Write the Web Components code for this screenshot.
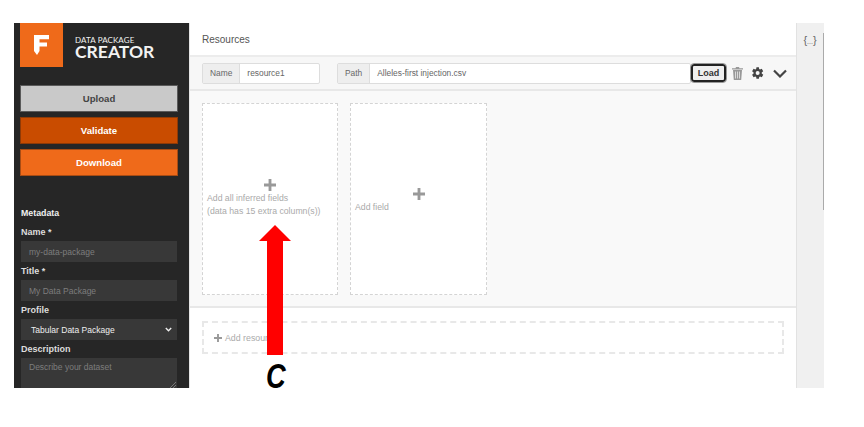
<!DOCTYPE html>
<html>
<head>
<meta charset="utf-8">
<title>Data Package Creator</title>
<style>
  html, body { margin: 0; padding: 0; background: #fff; }
  body { width: 864px; height: 427px; position: relative; overflow: hidden; font-family: "Liberation Sans", Arial, sans-serif; }
</style>
</head>
<body>
<dp-app>
  <dp-sidebar slot="sidebar">
    <dp-button slot="actions" kind="upload">Upload</dp-button>
    <dp-button slot="actions" kind="validate">Validate</dp-button>
    <dp-button slot="actions" kind="download">Download</dp-button>
    <dp-field slot="meta" label="Name *" placeholder="my-data-package"></dp-field>
    <dp-field slot="meta" label="Title *" placeholder="My Data Package"></dp-field>
    <dp-field slot="meta" label="Profile" type="select" placeholder="Tabular Data Package"></dp-field>
    <dp-field slot="meta" label="Description" type="textarea" placeholder="Describe your dataset"></dp-field>
  </dp-sidebar>
  <dp-resources slot="main">
    <dp-add-card slot="cards" width="136" shift="-1">Add all inferred fields<br>(data has 15 extra column(s))</dp-add-card>
    <dp-add-card slot="cards" width="137" shift="2">Add field</dp-add-card>
  </dp-resources>
  <dp-json-tab slot="aside"></dp-json-tab>
</dp-app>
<dp-annotation></dp-annotation>

<script>
const plusIcon = size => `<svg width="${size}" height="${size}" viewBox="0 0 11 11"><path d="M4.200 0h2.600v4.200H11v2.600H6.800V11H4.200V6.800H0V4.200h4.200z" fill="#999"/></svg>`

class DpApp extends HTMLElement {
  constructor() {
    super()
    this.attachShadow({ mode: 'open' })
    this.shadowRoot.innerHTML = `
      <style>
        :host { display: flex; width: 810px; height: 365px; margin: 23px 0 0 14px; overflow: hidden; }
        ::slotted([slot=sidebar]) { flex: 0 0 176px; }
        ::slotted([slot=main]) { flex: 0 0 606px; min-width: 0; }
        ::slotted([slot=aside]) { flex: 0 0 28px; }
      </style>
      <slot name="sidebar"></slot>
      <slot name="main"></slot>
      <slot name="aside"></slot>`
  }
}

class DpSidebar extends HTMLElement {
  constructor() {
    super()
    this.attachShadow({ mode: 'open' })
    this.shadowRoot.innerHTML = `
      <style>
        :host { display: block; box-sizing: border-box; height: 365px; overflow: hidden; background: #262626; color: #fff; padding-left: 6px; border-right: 1px solid #e4e4e4; }
        .brand { display: flex; align-items: center; height: 44px; }
        .mark { width: 43px; height: 44px; background: #ef6a1a; display: flex; align-items: center; justify-content: center; flex: none; }
        .name { margin-left: 12px; font-family: Lato, sans-serif; color: #f2f2f2; padding-top: 3px; }
        .small { font-size: 8px; line-height: 10px; letter-spacing: .1px; }
        .big { font-size: 17.5px; line-height: 14px; font-weight: 700; letter-spacing: 0; }
        .actions { display: flex; flex-direction: column; gap: 5px; margin-top: 18px; width: 158px; }
        h2 { margin: 31px 0 0 1px; font-size: 8.8px; line-height: 12px; font-weight: 700; color: #f0f0f0; }
        .meta { margin: 8px 0 0 1px; width: 156px; display: flex; flex-direction: column; gap: 4px; }
      </style>
      <div class="brand">
        <div class="mark">
          <svg width="15" height="20" viewBox="0 0 15 20"><path d="M0 0h15v4.200H5.500v3.400H13v4H5.500V16L3 20 0 16z" fill="#fff"/></svg>
        </div>
        <div class="name"><div class="small">DATA PACKAGE</div><div class="big">CREATOR</div></div>
      </div>
      <div class="actions"><slot name="actions"></slot></div>
      <h2>Metadata</h2>
      <div class="meta"><slot name="meta"></slot></div>`
  }
}

class DpButton extends HTMLElement {
  static colors = {
    upload: ['#c9c9c9', '#444', '#5a5a5a'],
    validate: ['#c94c00', '#fff', '#8f3a06'],
    download: ['#ef6a1a', '#fff', '#a84c14']
  }

  constructor() {
    super()
    this.attachShadow({ mode: 'open' })
  }

  connectedCallback() {
    const [bg, fg, border] = DpButton.colors[this.getAttribute('kind')]
    this.shadowRoot.innerHTML = `
      <style>
        :host { display: flex; box-sizing: border-box; height: 27px; align-items: center; justify-content: center; background: ${bg}; color: ${fg}; border: 1px solid ${border}; font-size: 9.6px; font-weight: 700; }
      </style>
      <slot></slot>`
  }
}

class DpField extends HTMLElement {
  constructor() {
    super()
    this.attachShadow({ mode: 'open' })
  }

  connectedCallback() {
    const type = this.getAttribute('type') || 'text'
    const text = this.getAttribute('placeholder')
    const extra = type == 'select'
      ? `<svg width="7" height="5" viewBox="0 0 7 5"><path d="M.8 1l2.700 2.700L6.200 1" fill="none" stroke="#eee" stroke-width="1.400"/></svg>`
      : type == 'textarea'
        ? `<svg class="grip" width="6" height="6" viewBox="0 0 6 6"><path d="M0 6l6-6M3 6l3-3" stroke="#888" stroke-width=".8"/></svg>`
        : ''
    this.shadowRoot.innerHTML = `
      <style>
        :host { display: block; }
        label { display: block; font-size: 9px; line-height: 11px; font-weight: 700; color: #ddd; margin-bottom: 3px; }
        .box { position: relative; box-sizing: border-box; height: 21px; background: #383838; color: #7d7d7d; font-size: 8.5px; display: flex; align-items: center; justify-content: space-between; padding: 0 5px 0 8px; }
        .select { color: #eee; padding-left: 10px; }
        .textarea { height: 30px; align-items: flex-start; padding-top: 4px; }
        .grip { position: absolute; right: 1px; bottom: 0; }
      </style>
      <label>${this.getAttribute('label')}</label>
      <div class="box ${type}"><span>${text}</span>${extra}</div>`
  }
}

class DpResources extends HTMLElement {
  constructor() {
    super()
    this.attachShadow({ mode: 'open' })
    this.shadowRoot.innerHTML = `
      <style>
        :host { display: block; box-sizing: border-box; height: 365px; background: #fff; color: #555; font-size: 8.4px; }
        .title { height: 34px; line-height: 33px; padding-left: 12px; font-size: 10px; color: #555; box-sizing: border-box; border-bottom: 2px solid #ececec; }
        .bar { display: flex; align-items: center; box-sizing: border-box; height: 34px; padding: 0 0 0 12px; background: #f7f7f7; border-bottom: 2px solid #e8e8e8; }
        .group { display: flex; box-sizing: border-box; height: 21px; border: 1px solid #ddd; border-radius: 2px; background: #fff; align-items: center; }
        .addon { align-self: stretch; display: flex; align-items: center; background: #eee; border-right: 1px solid #ddd; color: #666; padding: 0 7px; }
        .val { padding-left: 7px; color: #666; }
        .name { width: 118px; margin-right: 17px; }
        .path { width: 354px; }
        .load { box-sizing: border-box; width: 35px; height: 18px; margin-right: 6px; background: #efefef; border: 2px solid #222; border-radius: 3px; outline: 1px solid #999; display: flex; align-items: center; justify-content: center; font-size: 9px; font-weight: 700; color: #333; }
        .icons { display: flex; align-items: center; }
        .cards { display: flex; gap: 12px; height: 217px; box-sizing: border-box; padding: 12px; background: #f9f9f9; border-bottom: 2px solid #e8e8e8; }
        .add { margin: 13px 12px 0; height: 33px; box-sizing: border-box; border: 2px dashed #e8e8e8; display: flex; align-items: center; gap: 3px; padding-left: 10px; color: #aaa; font-size: 8.8px; }
      </style>
      <div class="title">Resources</div>
      <div class="bar">
        <div class="group name"><span class="addon">Name</span><span class="val">resource1</span></div>
        <div class="group path"><span class="addon">Path</span><span class="val">Alleles-first injection.csv</span></div>
        <div class="load">Load</div>
        <div class="icons">
          <svg width="11" height="13" viewBox="0 0 11 13" style="margin-right:9px"><path d="M1 3h9l-.8 10H1.800zM0 1.200h3.500L4 0h3l.5 1.200H11V2.400H0z" fill="#999"/><path d="M3.500 4.500v7M5.500 4.500v7M7.500 4.500v7" stroke="#f7f7f7" stroke-width=".7"/></svg>
          <svg width="12" height="12" viewBox="0 0 24 24" style="margin-right:9px"><path d="M19.400 13a7.500 7.500 0 0 0 0-2l3-2.300-2.900-5-3.500 1.400a7.500 7.500 0 0 0-1.700-1L13.800 .5H8.900L8.300 4.100a7.500 7.500 0 0 0-1.700 1L3.100 3.700 .2 8.700l3 2.300a7.500 7.500 0 0 0 0 2l-3 2.300 2.900 5 3.500-1.400a7.500 7.500 0 0 0 1.700 1l.6 3.600h4.900l.6-3.600a7.500 7.500 0 0 0 1.700-1l3.500 1.400 2.900-5zM11.300 16a4 4 0 1 1 0-8 4 4 0 0 1 0 8z" fill="#444"/></svg>
          <svg width="14" height="9" viewBox="0 0 14 9"><path d="M1 1.500l6 6 6-6" fill="none" stroke="#444" stroke-width="2.200"/></svg>
        </div>
      </div>
      <div class="cards"><slot name="cards"></slot></div>
      <div class="add">${plusIcon(8)}<span>Add resource</span></div>`
  }
}

class DpAddCard extends HTMLElement {
  constructor() {
    super()
    this.attachShadow({ mode: 'open' })
  }

  connectedCallback() {
    const shift = Number(this.getAttribute('shift'))
    this.shadowRoot.innerHTML = `
      <style>
        :host { display: flex; flex-direction: column; justify-content: center; box-sizing: border-box; width: ${this.getAttribute('width')}px; height: 192px; background: #fff; border: 1px dashed #d4d4d4; padding: ${Math.max(shift, 0) * 2}px 4px ${Math.max(-shift, 0) * 2}px; color: #aaa; font-size: 8.7px; line-height: 13px; }
        .plus { display: flex; justify-content: center; margin-bottom: 1px; }
      </style>
      <div class="plus">${plusIcon(12)}</div>
      <div><slot></slot></div>`
  }
}

class DpJsonTab extends HTMLElement {
  constructor() {
    super()
    this.attachShadow({ mode: 'open' })
    this.shadowRoot.innerHTML = `
      <style>
        :host { display: block; box-sizing: border-box; height: 365px; background: #f0f0f0; border-left: 1px solid #e2e2e2; color: #666; font-size: 11px; line-height: 13px; text-align: center; padding: 11px 1px 0 0; background-image: linear-gradient(#aaa, #aaa); background-size: 1px 177px; background-repeat: no-repeat; background-position: right 0 top 10px; }
        small { font-size: 7px; }
      </style>
      {<small>...</small>}`
  }
}

/* The red arrow and the handwritten letter lie over the page */
class DpAnnotation extends HTMLElement {
  constructor() {
    super()
    this.attachShadow({ mode: 'open' })
    this.shadowRoot.innerHTML = `
      <style>
        :host { display: block; position: absolute; left: 258px; top: 225px; width: 34px; height: 170px; }
        svg { display: block; }
        span { position: absolute; left: 8px; top: 131px; font: italic 700 35px/40px "Liberation Sans", sans-serif; color: #000; transform: scaleX(.78); transform-origin: left top; }
      </style>
      <svg width="34" height="130" viewBox="0 0 34 130"><path d="M17 0L33 16H25V130H9V16H1z" fill="#f00"/></svg>
      <span>C</span>`
  }
}

customElements.define('dp-app', DpApp)
customElements.define('dp-sidebar', DpSidebar)
customElements.define('dp-button', DpButton)
customElements.define('dp-field', DpField)
customElements.define('dp-resources', DpResources)
customElements.define('dp-add-card', DpAddCard)
customElements.define('dp-json-tab', DpJsonTab)
customElements.define('dp-annotation', DpAnnotation)
</script>
</body>
</html>
